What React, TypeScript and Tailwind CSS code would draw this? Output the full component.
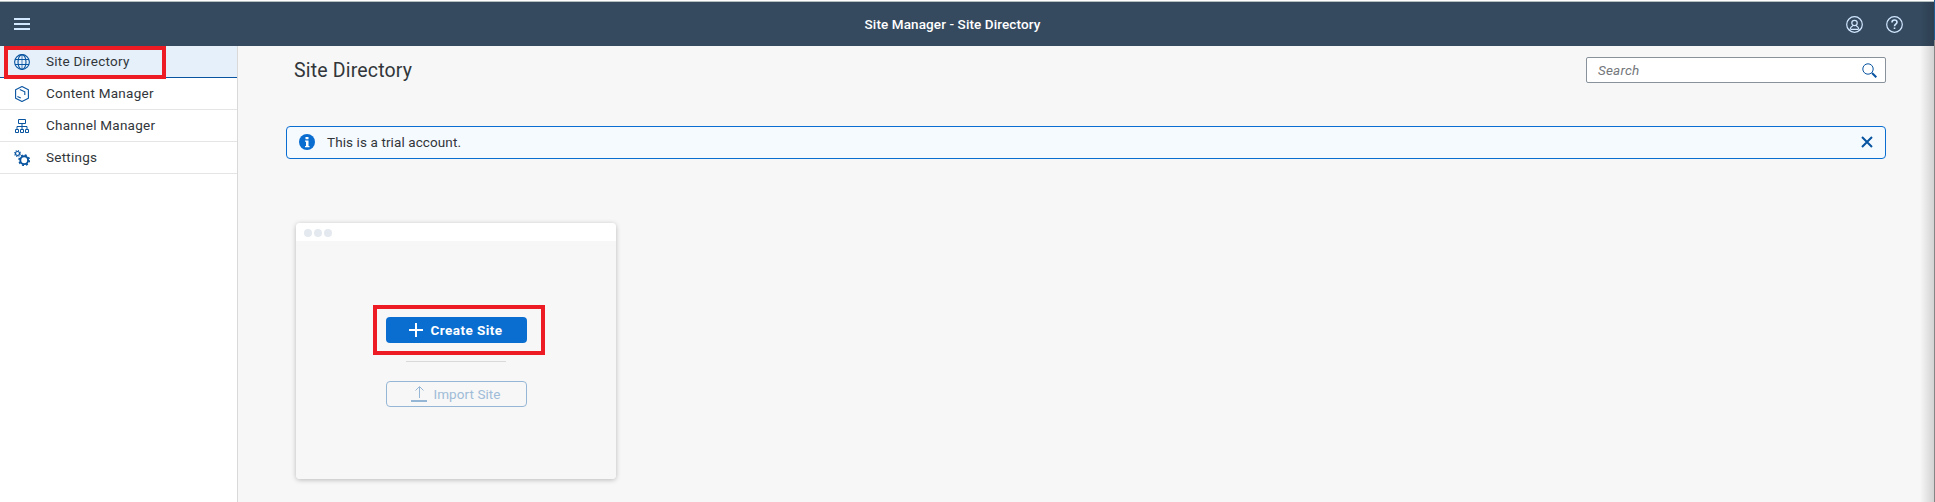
import type { ReactNode } from 'react';

function GlobeIcon() {
  return (
    <svg className="size-4" viewBox="0 0 16 16" fill="none" stroke="#0854a0" strokeWidth="1.1">
      <circle cx="8" cy="8" r="7.4" />
      <ellipse cx="8" cy="8" rx="4" ry="7.4" />
      <path d="M1 5.500h14M1 10.500h14" />
      <path d="M8 .6v14.800" strokeWidth="0.700" />
    </svg>
  );
}

function ProductIcon() {
  return (
    <svg className="size-4" viewBox="0 0 16 16" fill="none" stroke="#0854a0" strokeWidth="1.1">
      <path d="M8 .6 14.400 3.800v8.400L8 15.400 1.600 12.200V3.800z" strokeLinejoin="round" />
      <path d="M5.800 3.600l5 2.200v3.200M3.400 10.400l3.400 1.500" />
    </svg>
  );
}

function OrgIcon() {
  return (
    <svg className="size-4" viewBox="0 0 16 16" fill="none" stroke="#0854a0" strokeWidth="1">
      <path d="M4.500 1.500h7v4h-7zM8 5.500v6M3 11.500v-3h10v3M1.500 11.500h3v3h-3zM6.500 11.500h3v3h-3zM11.500 11.500h3v3h-3z" />
    </svg>
  );
}

function GearsIcon() {
  return (
    <svg className="size-4" viewBox="0 0 16 16" fill="none" stroke="#0854a0">
      <circle cx="3.500" cy="3.500" r="2" strokeWidth="1.200" />
      <circle cx="3.500" cy="3.500" r="2.900" strokeWidth="1.100" strokeDasharray="1.140 1.140" />
      <circle cx="10.200" cy="10.200" r="3.900" strokeWidth="1.900" />
      <circle cx="10.200" cy="10.200" r="5.200" strokeWidth="1.500" strokeDasharray="2.040 2.040" />
    </svg>
  );
}

function NavItem({ icon, label, active }: { icon: ReactNode; label: string; active?: boolean }) {
  return (
    <a className={`flex h-8 items-center gap-4 border-b pl-3.5 text-[13.5px] tracking-[0.25px] ${active ? 'border-[#0854a0] bg-[#e5f0fa]' : 'border-[#e5e5e5] bg-white'}`}>
      {icon}
      <span>{label}</span>
    </a>
  );
}

export default function App() {
  return (
    <div className="relative flex h-[502px] w-full flex-col overflow-hidden bg-[#f7f7f7] font-['Roboto',sans-serif] text-[#32363a]">
      <div className="h-0.5 shrink-0 border-b border-[#b5bfc0] bg-white" />
      <header className="flex h-11 shrink-0 items-center justify-between bg-[#354a5f] pr-8 pl-3.5 text-[#d1e8ff]">
        <div className="flex w-[45px]">
          <svg className="h-3 w-4" viewBox="0 0 16 12" fill="currentColor">
            <path d="M0 0h16v2H0zM0 5h16v2H0zM0 10h16v2H0z" />
          </svg>
        </div>
        <h1 className="text-[13.5px] font-medium tracking-[0.1px] text-white">Site Manager - Site Directory</h1>
        <div className="flex gap-[23px]">
          <svg className="size-[17px]" viewBox="0 0 17 17" fill="none" stroke="currentColor" strokeWidth="1.2">
            <circle cx="8.500" cy="8.500" r="7.800" />
            <circle cx="8.500" cy="7" r="2.700" />
            <path d="M3.700 14.300c.4-2.600 1.800-4 3.300-4.800M13.300 14.300c-.4-2.600-1.800-4-3.300-4.800M5 13.300h7" />
          </svg>
          <svg className="size-[17px]" viewBox="0 0 17 17" fill="none" stroke="currentColor" strokeWidth="1.2">
            <circle cx="8.500" cy="8.500" r="7.800" />
            <path d="M6 6.400C6 3.100 11 3.300 11 6.200c0 1.900-2.500 1.900-2.500 4M8.500 11.500v1.600" strokeWidth="1.600" />
          </svg>
        </div>
      </header>

      <div className="flex min-h-0 flex-1">
        <nav className="w-[238px] shrink-0 border-r border-[#d9d9d9] bg-white">
          <NavItem icon={<GlobeIcon />} label="Site Directory" active />
          <NavItem icon={<ProductIcon />} label="Content Manager" />
          <NavItem icon={<OrgIcon />} label="Channel Manager" />
          <NavItem icon={<GearsIcon />} label="Settings" />
        </nav>

        <main className="flex flex-1 flex-col pr-[49px] pl-12">
          <div className="flex h-[37px] justify-between pt-[11px] pl-2">
            <h2 className="text-[19.5px] leading-7 tracking-[0.18px]">Site Directory</h2>
            <div className="flex h-[26px] w-[300px] items-center justify-between rounded-xs border border-[#89919a] bg-white pr-2 pl-[11px]">
              <span className="text-[13.5px] tracking-[0.2px] text-[#74777a] italic">Search</span>
              <svg className="size-[15px]" viewBox="0 0 15 15" fill="none" stroke="#0854a0">
                <circle cx="6" cy="6" r="5.200" />
                <path d="M10 10l4.300 4.300" strokeWidth="2" />
              </svg>
            </div>
          </div>

          <div className="mt-[43px] flex h-[33px] items-center rounded border border-[#0a6ed1] bg-[#f5faff] px-3 pb-px">
            <svg className="mr-3 size-4" viewBox="0 0 16 16">
              <circle cx="8" cy="8" r="8" fill="#0a6ed1" />
              <path d="M6.500 3h3v2.200h-3zM6 6.500h3.500V12h1v1.200H6V12h1V7.700H6z" fill="#fff" />
            </svg>
            <span className="flex-1 text-[13.5px] tracking-[0.1px]">This is a trial account.</span>
            <svg className="size-3" viewBox="0 0 12 12" fill="none" stroke="#0854a0" strokeWidth="2">
              <path d="M1 1l10 10M11 1 1 11" />
            </svg>
          </div>

          <section className="mt-16 ml-2.5 flex h-64 w-80 flex-col overflow-hidden rounded shadow-[0_1px_5px_rgba(0,0,0,0.25)]">
            <div className="flex h-[18px] items-center gap-0.5 bg-white pt-0.5 pl-2">
              <i className="size-2 rounded-full bg-[#e4e9ef]" />
              <i className="size-2 rounded-full bg-[#e4e9ef]" />
              <i className="size-2 rounded-full bg-[#e4e9ef]" />
            </div>
            <div className="flex flex-1 flex-col items-center bg-[#f7f7f7] pt-[76px]">
              <button className="flex h-[26px] w-[141px] items-center justify-center gap-[7px] rounded bg-[#0a6ed1] text-[13.5px] font-bold tracking-[0.45px] text-white">
                <svg className="size-[14px]" viewBox="0 0 14 14" fill="currentColor">
                  <path d="M6 0h2v6h6v2H8v6H6V8H0V6h6z" />
                </svg>
                <span>Create Site</span>
              </button>
              <div className="mt-[18px] h-px w-[100px] bg-[#d9d9d9]" />
              <button className="mt-[19px] flex h-[26px] w-[141px] items-center justify-center gap-1.5 rounded border border-[#96b6d5] text-[13.5px] tracking-[0.08px] text-[#a0bcd8]">
                <svg className="size-4" viewBox="0 0 16 16" fill="none" stroke="#96b6d5">
                  <path d="M8.500 12V1M4.500 4.500l4-4 4 4" />
                  <path d="M0 15h16" strokeWidth="2" />
                </svg>
                <span>Import Site</span>
              </button>
            </div>
          </section>
        </main>
      </div>

      <div className="pointer-events-none absolute top-[46px] left-1 h-[33px] w-[162px] border-4 border-[#ed1c24]" />
      <div className="pointer-events-none absolute top-[305px] left-[373px] h-[50px] w-[172px] border-4 border-[#ed1c24]" />
      <div className="pointer-events-none absolute top-0.5 right-px h-[500px] w-3.5 bg-linear-to-r from-transparent to-black/15" />
      <div className="absolute top-0 right-0 flex h-full w-px flex-col bg-[#858585]">
        <div className="h-10 bg-[#1f5c8f]" />
      </div>
    </div>
  );
}
